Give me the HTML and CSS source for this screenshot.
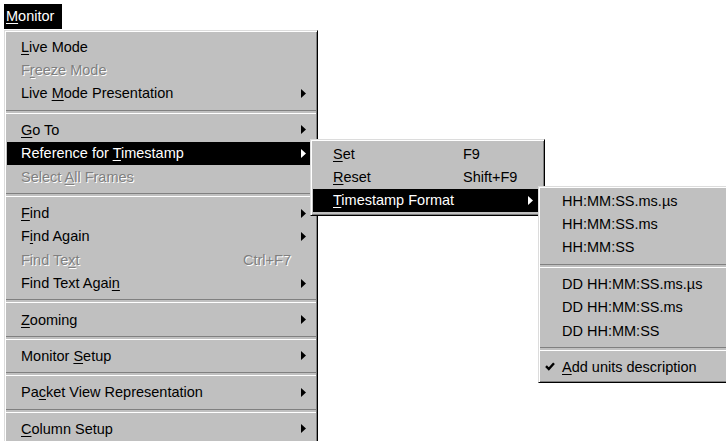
FILE: index.html
```html
<!DOCTYPE html>
<html lang="en">
<head>
<meta charset="utf-8">
<title>Monitor menu</title>
<link rel="stylesheet" href="styles.css">
</head>
<body>
<div class="menubar">
  <span class="menubar-item open"><u>M</u>onitor</span>
</div>

<div class="menu main-menu">
  <div class="item"><span class="label"><u>L</u>ive Mode</span></div>
  <div class="item disabled"><span class="label">F<u>r</u>eeze Mode</span></div>
  <div class="item"><span class="label">Live <u>M</u>ode Presentation</span><span class="key"></span><span class="more"><svg width="5" height="9" viewBox="0 0 5 9"><path d="M0 0L5 4.5L0 9Z"/></svg></span></div>
  <div class="sep"></div>
  <div class="item"><span class="label"><u>G</u>o To</span><span class="key"></span><span class="more"><svg width="5" height="9" viewBox="0 0 5 9"><path d="M0 0L5 4.5L0 9Z"/></svg></span></div>
  <div class="item active"><span class="label">Reference for <u>T</u>imestamp</span><span class="key"></span><span class="more"><svg width="5" height="9" viewBox="0 0 5 9"><path d="M0 0L5 4.5L0 9Z"/></svg></span></div>
  <div class="item disabled"><span class="label">Select <u>A</u>ll Frames</span></div>
  <div class="sep"></div>
  <div class="item"><span class="label"><u>F</u>ind</span><span class="key"></span><span class="more"><svg width="5" height="9" viewBox="0 0 5 9"><path d="M0 0L5 4.5L0 9Z"/></svg></span></div>
  <div class="item"><span class="label">F<u>i</u>nd Again</span><span class="key"></span><span class="more"><svg width="5" height="9" viewBox="0 0 5 9"><path d="M0 0L5 4.5L0 9Z"/></svg></span></div>
  <div class="item disabled"><span class="label">Find Te<u>x</u>t</span><span class="key">Ctrl+F7</span></div>
  <div class="item"><span class="label">Find Text Agai<u>n</u></span><span class="key"></span><span class="more"><svg width="5" height="9" viewBox="0 0 5 9"><path d="M0 0L5 4.5L0 9Z"/></svg></span></div>
  <div class="sep"></div>
  <div class="item"><span class="label"><u>Z</u>ooming</span><span class="key"></span><span class="more"><svg width="5" height="9" viewBox="0 0 5 9"><path d="M0 0L5 4.5L0 9Z"/></svg></span></div>
  <div class="sep"></div>
  <div class="item"><span class="label">Monitor <u>S</u>etup</span><span class="key"></span><span class="more"><svg width="5" height="9" viewBox="0 0 5 9"><path d="M0 0L5 4.5L0 9Z"/></svg></span></div>
  <div class="sep"></div>
  <div class="item"><span class="label">Pa<u>c</u>ket View Representation</span><span class="key"></span><span class="more"><svg width="5" height="9" viewBox="0 0 5 9"><path d="M0 0L5 4.5L0 9Z"/></svg></span></div>
  <div class="sep"></div>
  <div class="item"><span class="label"><u>C</u>olumn Setup</span><span class="key"></span><span class="more"><svg width="5" height="9" viewBox="0 0 5 9"><path d="M0 0L5 4.5L0 9Z"/></svg></span></div>
</div>

<div class="menu submenu ref-menu">
  <div class="item"><span class="label"><u>S</u>et</span><span class="key">F9</span></div>
  <div class="item"><span class="label"><u>R</u>eset</span><span class="key">Shift+F9</span></div>
  <div class="item active"><span class="label"><u>T</u>imestamp Format</span><span class="key"></span><span class="more"><svg width="5" height="9" viewBox="0 0 5 9"><path d="M0 0L5 4.5L0 9Z"/></svg></span></div>
</div>

<div class="menu submenu format-menu">
  <div class="item"><span class="label">HH:MM:SS.ms.µs</span></div>
  <div class="item"><span class="label">HH:MM:SS.ms</span></div>
  <div class="item"><span class="label">HH:MM:SS</span></div>
  <div class="sep"></div>
  <div class="item"><span class="label">DD HH:MM:SS.ms.µs</span></div>
  <div class="item"><span class="label">DD HH:MM:SS.ms</span></div>
  <div class="item"><span class="label">DD HH:MM:SS</span></div>
  <div class="sep"></div>
  <div class="item checked"><svg class="check" width="10" height="9" viewBox="0 0 10 9"><path d="M1 4.2L3.8 7L9 1.2"/></svg><span class="label"><u>A</u>dd units description</span></div>
</div>
</body>
</html>
```

FILE: styles.css
```css
* {
  box-sizing: border-box;
}

body {
  margin: 0;
  width: 726px;
  height: 441px;
  overflow: hidden;
  position: relative;
  background: #fff;
  color: #000;
  font-family: "Liberation Sans", Arial, sans-serif;
  font-size: 14.5px;
}

u {
  text-decoration: underline;
  text-decoration-thickness: 1px;
  text-underline-offset: 2px;
}

/* top menu bar */
.menubar {
  padding: 4px 0 0 4px;
  height: 29px;
}

.menubar-item {
  display: inline-block;
  height: 25px;
  line-height: 25px;
  padding: 0 8px 0 2px;
}

.menubar-item.open {
  background: #000;
  color: #fff;
}

/* raised popup frame */
.menu {
  background: #c0c0c0;
  border: 1px solid;
  border-color: #dcdcdc #000 #000 #dcdcdc;
  box-shadow: inset 1px 1px 0 #fff, inset -1px -1px 0 #808080;
}

.main-menu {
  width: 314px;
  margin: 1px 0 0 4px;
  padding: 4px 2px 3px;
}

.submenu {
  position: absolute;
  padding: 2px 2px 3px;
}

.ref-menu {
  left: 310px;
  top: 139px;
  width: 235px;
}

.format-menu {
  left: 538px;
  top: 186px;
  width: 200px;
}

/* rows */
.item {
  display: grid;
  align-items: center;
  height: 23.4px;
  white-space: nowrap;
}

.main-menu .item {
  grid-template-columns: 1fr 55px 17px;
  padding-left: 14px;
}

.ref-menu .item {
  grid-template-columns: 1fr 62px 17px;
  padding-left: 20px;
}

.format-menu .item {
  grid-template-columns: 1fr;
  padding-left: 21px;
}

.format-menu .item.checked {
  position: relative;
}

.check {
  position: absolute;
  left: 4px;
  top: 7px;
  fill: none;
  stroke: #000;
  stroke-width: 2.4;
}

.item.active {
  background: #000;
  color: #fff;
}

.item.disabled {
  color: #808080;
  text-shadow: 1px 1px 0 #fff;
}

.more {
  display: flex;
  align-items: center;
  padding-left: 3px;
}

.more svg {
  fill: currentColor;
}

.key {
  display: block;
}

/* etched divider */
.sep {
  height: 13px;
  display: flex;
  align-items: center;
  margin: 0 -1px;
}

.sep::before {
  content: "";
  flex: 1;
  height: 2px;
  border-top: 1px solid #808080;
  border-bottom: 1px solid #fff;
}
```
